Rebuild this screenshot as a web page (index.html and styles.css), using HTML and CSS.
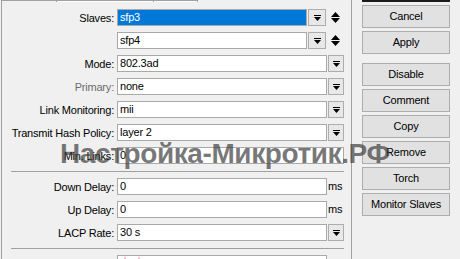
FILE: index.html
```html
<!DOCTYPE html>
<html lang="en">
  <head>
    <meta charset="UTF-8">
    <title>Bonding</title>
    <link rel="stylesheet" href="styles.css">
  </head>
  <body>
    <div class="window">
      <div class="panel">
        <div class="tabs">
          <span class="tab tab-general"></span>
          <span class="tab tab-bonding"></span>
          <span class="tab tab-status"></span>
        </div>

        <div class="form">
          <div class="row">
            <span class="lbl">Slaves:</span>
            <div class="field">
              <div class="input selected">sfp3</div>
              <div class="drop drop-wide">
                <svg width="7" height="6" viewBox="0 0 7 6"><rect x="0" y="0" width="7" height="1"/><polygon points="0,2 7,2 3.5,6"/></svg>
              </div>
              <div class="spin">
                <svg width="9" height="11" viewBox="0 0 9 11"><polygon points="4.5,0 9,5 0,5"/><polygon points="0,6 9,6 4.5,11"/></svg>
              </div>
            </div>
          </div>
          <div class="row">
            <span class="lbl"></span>
            <div class="field">
              <div class="input">sfp4</div>
              <div class="drop drop-wide">
                <svg width="7" height="6" viewBox="0 0 7 6"><rect x="0" y="0" width="7" height="1"/><polygon points="0,2 7,2 3.5,6"/></svg>
              </div>
              <div class="spin">
                <svg width="9" height="11" viewBox="0 0 9 11"><polygon points="4.5,0 9,5 0,5"/><polygon points="0,6 9,6 4.5,11"/></svg>
              </div>
            </div>
          </div>
          <div class="row">
            <span class="lbl">Mode:</span>
            <div class="field">
              <div class="input">802.3ad</div>
              <div class="drop">
                <svg width="7" height="6" viewBox="0 0 7 6"><rect x="0" y="0" width="7" height="1"/><polygon points="0,2 7,2 3.5,6"/></svg>
              </div>
            </div>
          </div>
          <div class="row">
            <span class="lbl disabled">Primary:</span>
            <div class="field">
              <div class="input">none</div>
              <div class="drop">
                <svg width="7" height="6" viewBox="0 0 7 6"><rect x="0" y="0" width="7" height="1"/><polygon points="0,2 7,2 3.5,6"/></svg>
              </div>
            </div>
          </div>
          <div class="row">
            <span class="lbl">Link Monitoring:</span>
            <div class="field">
              <div class="input">mii</div>
              <div class="drop">
                <svg width="7" height="6" viewBox="0 0 7 6"><rect x="0" y="0" width="7" height="1"/><polygon points="0,2 7,2 3.5,6"/></svg>
              </div>
            </div>
          </div>
          <div class="row">
            <span class="lbl">Transmit Hash Policy:</span>
            <div class="field">
              <div class="input">layer 2</div>
              <div class="drop">
                <svg width="7" height="6" viewBox="0 0 7 6"><rect x="0" y="0" width="7" height="1"/><polygon points="0,2 7,2 3.5,6"/></svg>
              </div>
            </div>
          </div>
          <div class="row">
            <span class="lbl">Min. Links:</span>
            <div class="field">
              <div class="input">0</div>
            </div>
          </div>

          <div class="sep"></div>

          <div class="row">
            <span class="lbl">Down Delay:</span>
            <div class="field">
              <div class="input">0</div>
              <span class="unit">ms</span>
            </div>
          </div>
          <div class="row">
            <span class="lbl">Up Delay:</span>
            <div class="field">
              <div class="input">0</div>
              <span class="unit">ms</span>
            </div>
          </div>
          <div class="row">
            <span class="lbl">LACP Rate:</span>
            <div class="field">
              <div class="input">30 s</div>
              <div class="drop">
                <svg width="7" height="6" viewBox="0 0 7 6"><rect x="0" y="0" width="7" height="1"/><polygon points="0,2 7,2 3.5,6"/></svg>
              </div>
            </div>
          </div>

          <div class="sep"></div>

          <div class="row">
            <span class="lbl"></span>
            <div class="field">
              <div class="input"><span class="mark"></span></div>
              <span class="unit"></span>
            </div>
          </div>
        </div>
      </div>

      <div class="buttons">
        <div class="btn btn-default">OK</div>
        <div class="btn">Cancel</div>
        <div class="btn">Apply</div>
        <div class="btn btn-group">Disable</div>
        <div class="btn">Comment</div>
        <div class="btn">Copy</div>
        <div class="btn">Remove</div>
        <div class="btn">Torch</div>
        <div class="btn">Monitor Slaves</div>
      </div>

      <div class="watermark">Настройка-Микротик.РФ</div>
    </div>
  </body>
</html>
```

FILE: styles.css
```css
body {
  margin: 0;
  background-color: #f0f0f0;
  font-family: "Liberation Sans", Arial, sans-serif;
  font-size: 11px;
  letter-spacing: -0.2px;
  color: #000;
}
.window {
  position: relative;
  display: flex;
  height: 259px;
  overflow: hidden;
}
.panel {
  flex: none;
  width: 349px;
  margin-left: 1px;
  border-left: 1px solid #a0a0a0;
  border-right: 1px solid #a0a0a0;
}
.tabs {
  display: flex;
  height: 2px;
}
.tab {
  height: 1px;
  border-top: 1px solid #a0a0a0;
  border-right: 1px solid #a0a0a0;
  background-color: #fff;
}
.tab-general {
  width: 54px;
  background-color: #f0f0f0;
}
.tab-bonding {
  width: 96px;
}
.tab-status {
  width: 43px;
}
.form {
  display: flex;
  flex-direction: column;
  gap: 6px;
  padding-top: 7px;
}
.row {
  display: flex;
  align-items: center;
  gap: 3px;
  height: 17px;
}
.lbl {
  flex: none;
  width: 112px;
  text-align: right;
  white-space: nowrap;
}
.lbl.disabled {
  color: #6d6d6d;
}
.field {
  display: flex;
  gap: 1px;
  width: 227px;
  height: 17px;
}
.input {
  flex: 1;
  box-sizing: border-box;
  height: 17px;
  padding-left: 2px;
  border: 1px solid #a9a9a9;
  background-color: #fff;
  line-height: 15px;
  white-space: nowrap;
  overflow: hidden;
}
.input.selected {
  background-color: #0078d7;
  color: #fff;
}
.mark {
  display: inline-block;
  width: 12px;
  height: 3px;
  margin: 1px 0 0 4px;
  vertical-align: top;
  border-left: 2px solid #f4c4cc;
  border-right: 2px solid #f4c4cc;
}
.drop {
  flex: none;
  box-sizing: border-box;
  display: flex;
  align-items: center;
  justify-content: center;
  width: 16px;
  height: 17px;
  border: 1px solid #adadad;
  background-color: #e8e8e8;
}
.drop-wide {
  width: 18px;
}
.spin {
  flex: none;
  display: flex;
  align-items: center;
  justify-content: center;
  width: 17px;
}
.unit {
  flex: none;
  width: 16px;
  line-height: 17px;
}
.sep {
  width: 333px;
  height: 1px;
  margin: 1px 0 0 9px;
  background-color: #a0a0a0;
}
.buttons {
  flex: none;
  display: flex;
  flex-direction: column;
  gap: 3px;
  width: 88px;
  margin-top: -21px;
  margin-left: 10px;
}
.btn {
  box-sizing: border-box;
  height: 23px;
  border: 1px solid #adadad;
  background-color: #e1e1e1;
  text-align: center;
  line-height: 21px;
}
.btn-default {
  border: 2px solid #1a1a1a;
}
.btn-group {
  margin-top: 6px;
}
.watermark {
  position: absolute;
  top: 140px;
  left: 60px;
  font-size: 28px;
  font-weight: bold;
  line-height: 28px;
  letter-spacing: -0.4px;
  color: rgba(60, 60, 60, 0.7);
  white-space: nowrap;
  pointer-events: none;
}
```
